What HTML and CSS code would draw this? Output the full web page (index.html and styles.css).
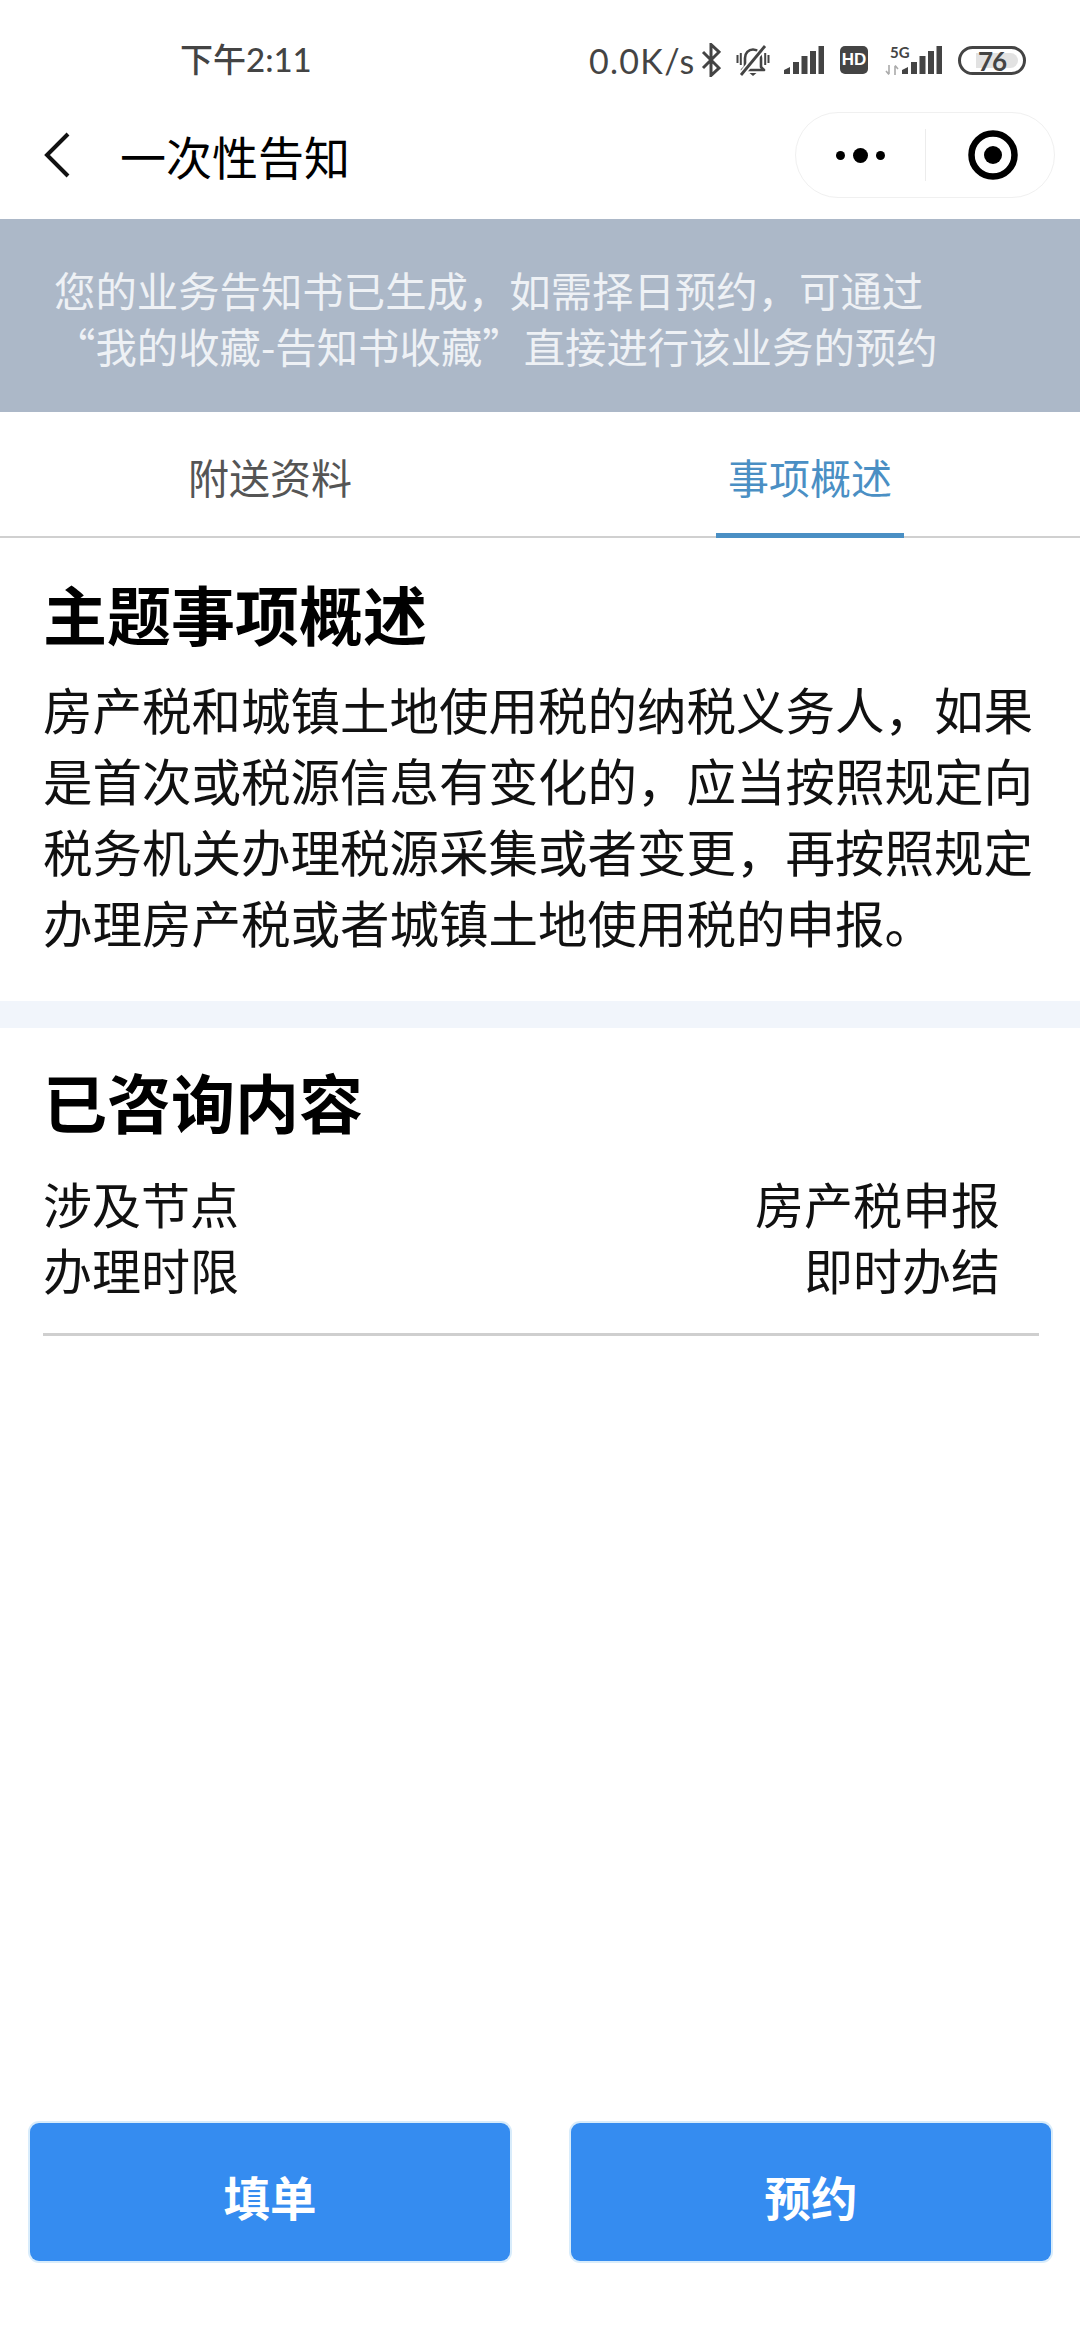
FILE: index.html
```html
<!DOCTYPE html>
<html lang="zh-CN">
<head>
  <meta charset="UTF-8" />
  <title>一次性告知</title>
  <meta name="viewport" content="width=device-width, initial-scale=1.0"/>
  <link rel="stylesheet" href="styles.css">
</head>
<body>

  <div class="status-bar">
    <span class="clock">下午2:11</span>
    <div class="status-right">
      <span class="net-speed">0.0K/s</span>
      <svg class="ico-bt" width="20" height="34" viewBox="0 0 20 34"><path d="M2 9 18 25 10 32.500V1.500L18 9 2 25" fill="none" stroke="#444" stroke-width="3"/></svg>
      <svg class="ico-bell" width="34" height="33" viewBox="0 0 34 33">
        <path d="M9 23V14C9 9 12.500 5.500 17 5.500S25 9 25 14V23L28 26H6Z" fill="none" stroke="#444" stroke-width="2.600" stroke-linejoin="round"/>
        <path d="M13.500 29H20.500L17 32Z" fill="#444"/>
        <path d="M1.500 11V19M4.800 9V21M29.200 9V21M32.500 11V19" stroke="#444" stroke-width="2"/>
        <path d="M5 31 29 2" stroke="#fff" stroke-width="6"/>
        <path d="M5 31 29 2" stroke="#444" stroke-width="2.800"/>
      </svg>
      <svg class="ico-signal" width="40" height="28" viewBox="0 0 40 28"><path d="M0 28V24L6 21V28ZM9 28V16H15V28ZM17.500 28V10H23.500V28ZM26 28V5H32V28ZM34.500 28V0H40V28Z" fill="#444"/></svg>
      <span class="hd-badge">HD</span>
      <div class="net-type">
        <span class="net-5g">5G</span>
        <svg class="ico-arrows" width="14" height="10" viewBox="0 0 14 10"><path d="M4 0V9M1 6 4 9.500M10 10V1M10 .5 13 4" fill="none" stroke="#aaa" stroke-width="1.600"/></svg>
      </div>
      <svg class="ico-signal-2" width="40" height="28" viewBox="0 0 40 28"><path d="M0 28V24L6 21V28ZM9 28V16H15V28ZM17.500 28V10H23.500V28ZM26 28V5H32V28ZM34.500 28V0H40V28Z" fill="#444"/></svg>
      <div class="battery">
        <span class="battery-level">76</span>
      </div>
    </div>
  </div>

  <div class="nav-bar">
    <svg class="nav-back" width="26" height="46" viewBox="0 0 26 46"><path d="M24 2 3 23 24 44" fill="none" stroke="#111" stroke-width="4"/></svg>
    <span class="nav-title">一次性告知</span>
    <div class="capsule">
      <div class="capsule-more">
        <i class="dot"></i><i class="dot dot-big"></i><i class="dot"></i>
      </div>
      <div class="capsule-close">
        <svg width="50" height="50" viewBox="0 0 50 50"><circle cx="25" cy="25" r="21.500" fill="none" stroke="#000" stroke-width="6.500"/><circle cx="25" cy="25" r="9" fill="#000"/></svg>
      </div>
    </div>
  </div>

  <div class="notice">
    <p>您的业务告知书已生成，如需择日预约，可通过<br>“我的收藏-告知书收藏”直接进行该业务的预约</p>
  </div>

  <div class="tabs">
    <div class="tab"><span class="tab-label">附送资料</span></div>
    <div class="tab active"><span class="tab-label">事项概述</span></div>
  </div>

  <div class="section summary">
    <h2>主题事项概述</h2>
    <p>房产税和城镇土地使用税的纳税义务人，如果是首次或税源信息有变化的，应当按照规定向税务机关办理税源采集或者变更，再按照规定办理房产税或者城镇土地使用税的申报。</p>
  </div>

  <div class="section-gap"></div>

  <div class="section consulted">
    <h2>已咨询内容</h2>
    <div class="info-rows">
      <div class="info-row"><span>涉及节点</span><span>房产税申报</span></div>
      <div class="info-row"><span>办理时限</span><span>即时办结</span></div>
    </div>
  </div>

  <div class="actions">
    <button>填单</button>
    <button>预约</button>
  </div>

</body>
</html>
```

FILE: styles.css
```css
* {
  box-sizing: border-box;
}
body {
  margin: 0;
  height: 2340px;
  display: flex;
  flex-direction: column;
  background: #fff;
  color: #000;
  font-family: "Noto Sans CJK SC", "Noto Sans", sans-serif;
}
h2, p {
  margin: 0;
}

/* status bar */
.status-bar {
  height: 100px;
  padding: 30px 54px 10px 180px;
  display: flex;
  align-items: center;
  justify-content: space-between;
  color: #444;
}
.clock {
  font-family: Lato, "Noto Sans CJK SC", sans-serif;
  font-size: 33px;
  font-weight: 500;
  margin-top: -4px;
}
.status-right {
  display: flex;
  align-items: center;
}
.net-speed {
  font-family: Lato, sans-serif;
  font-size: 34px;
  letter-spacing: 1.300px;
  width: 110px;
}
.ico-bt {
  margin-left: 2px;
}
.ico-bell {
  margin-left: 15px;
}
.ico-signal {
  margin-left: 14px;
}
.hd-badge {
  margin-left: 16px;
  width: 28px;
  height: 28px;
  border-radius: 5px;
  background: #444;
  color: #fff;
  font-family: "Liberation Sans", sans-serif;
  font-size: 17px;
  font-weight: bold;
  line-height: 28px;
  text-align: center;
}
.net-type {
  margin-left: 17px;
  width: 26px;
  height: 30px;
  display: flex;
  flex-direction: column;
  align-items: flex-start;
}
.net-5g {
  font-family: Lato, sans-serif;
  font-size: 15px;
  font-weight: bold;
  line-height: 15px;
  margin-left: 5px;
}
.ico-arrows {
  margin-top: 5px;
}
.ico-signal-2 {
  margin-left: -9px;
}
.battery {
  margin-left: 16px;
  width: 68px;
  height: 29px;
  padding: 4px 5px 4px 15px;
  border: 3px solid #444;
  border-radius: 15px;
  display: flex;
}
.battery-level {
  flex: 1;
  background: #e2e2e2;
  border-radius: 0 8px 8px 0;
  font-family: Lato, sans-serif;
  font-size: 26px;
  font-weight: bold;
  line-height: 17px;
  text-indent: 2px;
  letter-spacing: -1px;
}

/* title bar */
.nav-bar {
  height: 119px;
  padding: 0 25px 9px 44px;
  display: flex;
  align-items: center;
}
.nav-title {
  margin-left: 50px;
  font-size: 46px;
  flex: 1;
}
.capsule {
  width: 260px;
  height: 86px;
  border: 1px solid #f0f0f0;
  border-radius: 43px;
  display: flex;
  align-items: center;
}
.capsule-more {
  width: 130px;
  height: 52px;
  border-right: 1px solid #ececec;
  display: flex;
  align-items: center;
  justify-content: center;
  gap: 8px;
}
.dot {
  width: 9px;
  height: 9px;
  border-radius: 50%;
  background: #000;
}
.dot-big {
  width: 15px;
  height: 15px;
}
.capsule-close {
  flex: 1;
  display: flex;
  justify-content: center;
  padding-left: 6px;
}

/* notice banner */
.notice {
  height: 193px;
  padding: 2px 54px 0;
  display: flex;
  align-items: center;
  background: #acb8c8;
  color: #eef1f5;
  font-size: 41.400px;
  line-height: 56px;
}
.notice p {
  white-space: nowrap;
}

/* tabs */
.tabs {
  height: 126px;
  display: grid;
  grid-template-columns: 1fr 1fr;
  border-bottom: 2px solid #d0d0d0;
}
.tab {
  text-align: center;
  color: #555;
  font-size: 41px;
}
.tab-label {
  display: inline-block;
  height: 126px;
  padding: 0 12px;
  line-height: 128px;
  border-bottom: 5px solid transparent;
}
.tab.active {
  color: #4a8fc4;
}
.tab.active .tab-label {
  border-bottom-color: #4a8fc4;
}

/* content */
.section h2 {
  font-size: 64px;
  font-weight: bold;
  line-height: 80px;
}
.summary {
  padding: 34px 37px 44px 43px;
}
.summary p {
  margin-top: 21px;
  font-size: 49.500px;
  line-height: 71px;
  color: #111;
}
.section-gap {
  height: 27px;
  background: #f1f5fb;
}
.consulted {
  margin: 0 41px 0 43px;
  padding-top: 32px;
  border-bottom: 3px solid #cfcfcf;
}
.info-rows {
  margin-top: 30px;
  padding: 0 39px 31px 0;
  font-size: 49px;
  line-height: 66px;
  color: #111;
}
.info-row {
  display: flex;
  justify-content: space-between;
}

/* bottom buttons */
.actions {
  margin-top: auto;
  padding: 0 29px 79px 30px;
  display: grid;
  grid-template-columns: 480px 480px;
  gap: 61px;
}
.actions button {
  height: 138px;
  padding: 6px 0 0;
  border: none;
  border-radius: 9px;
  background: #358cf0;
  box-shadow: 0 0 0 2px #d8ecfb;
  color: #fff;
  font-family: inherit;
  font-size: 46.500px;
  font-weight: bold;
}
```
